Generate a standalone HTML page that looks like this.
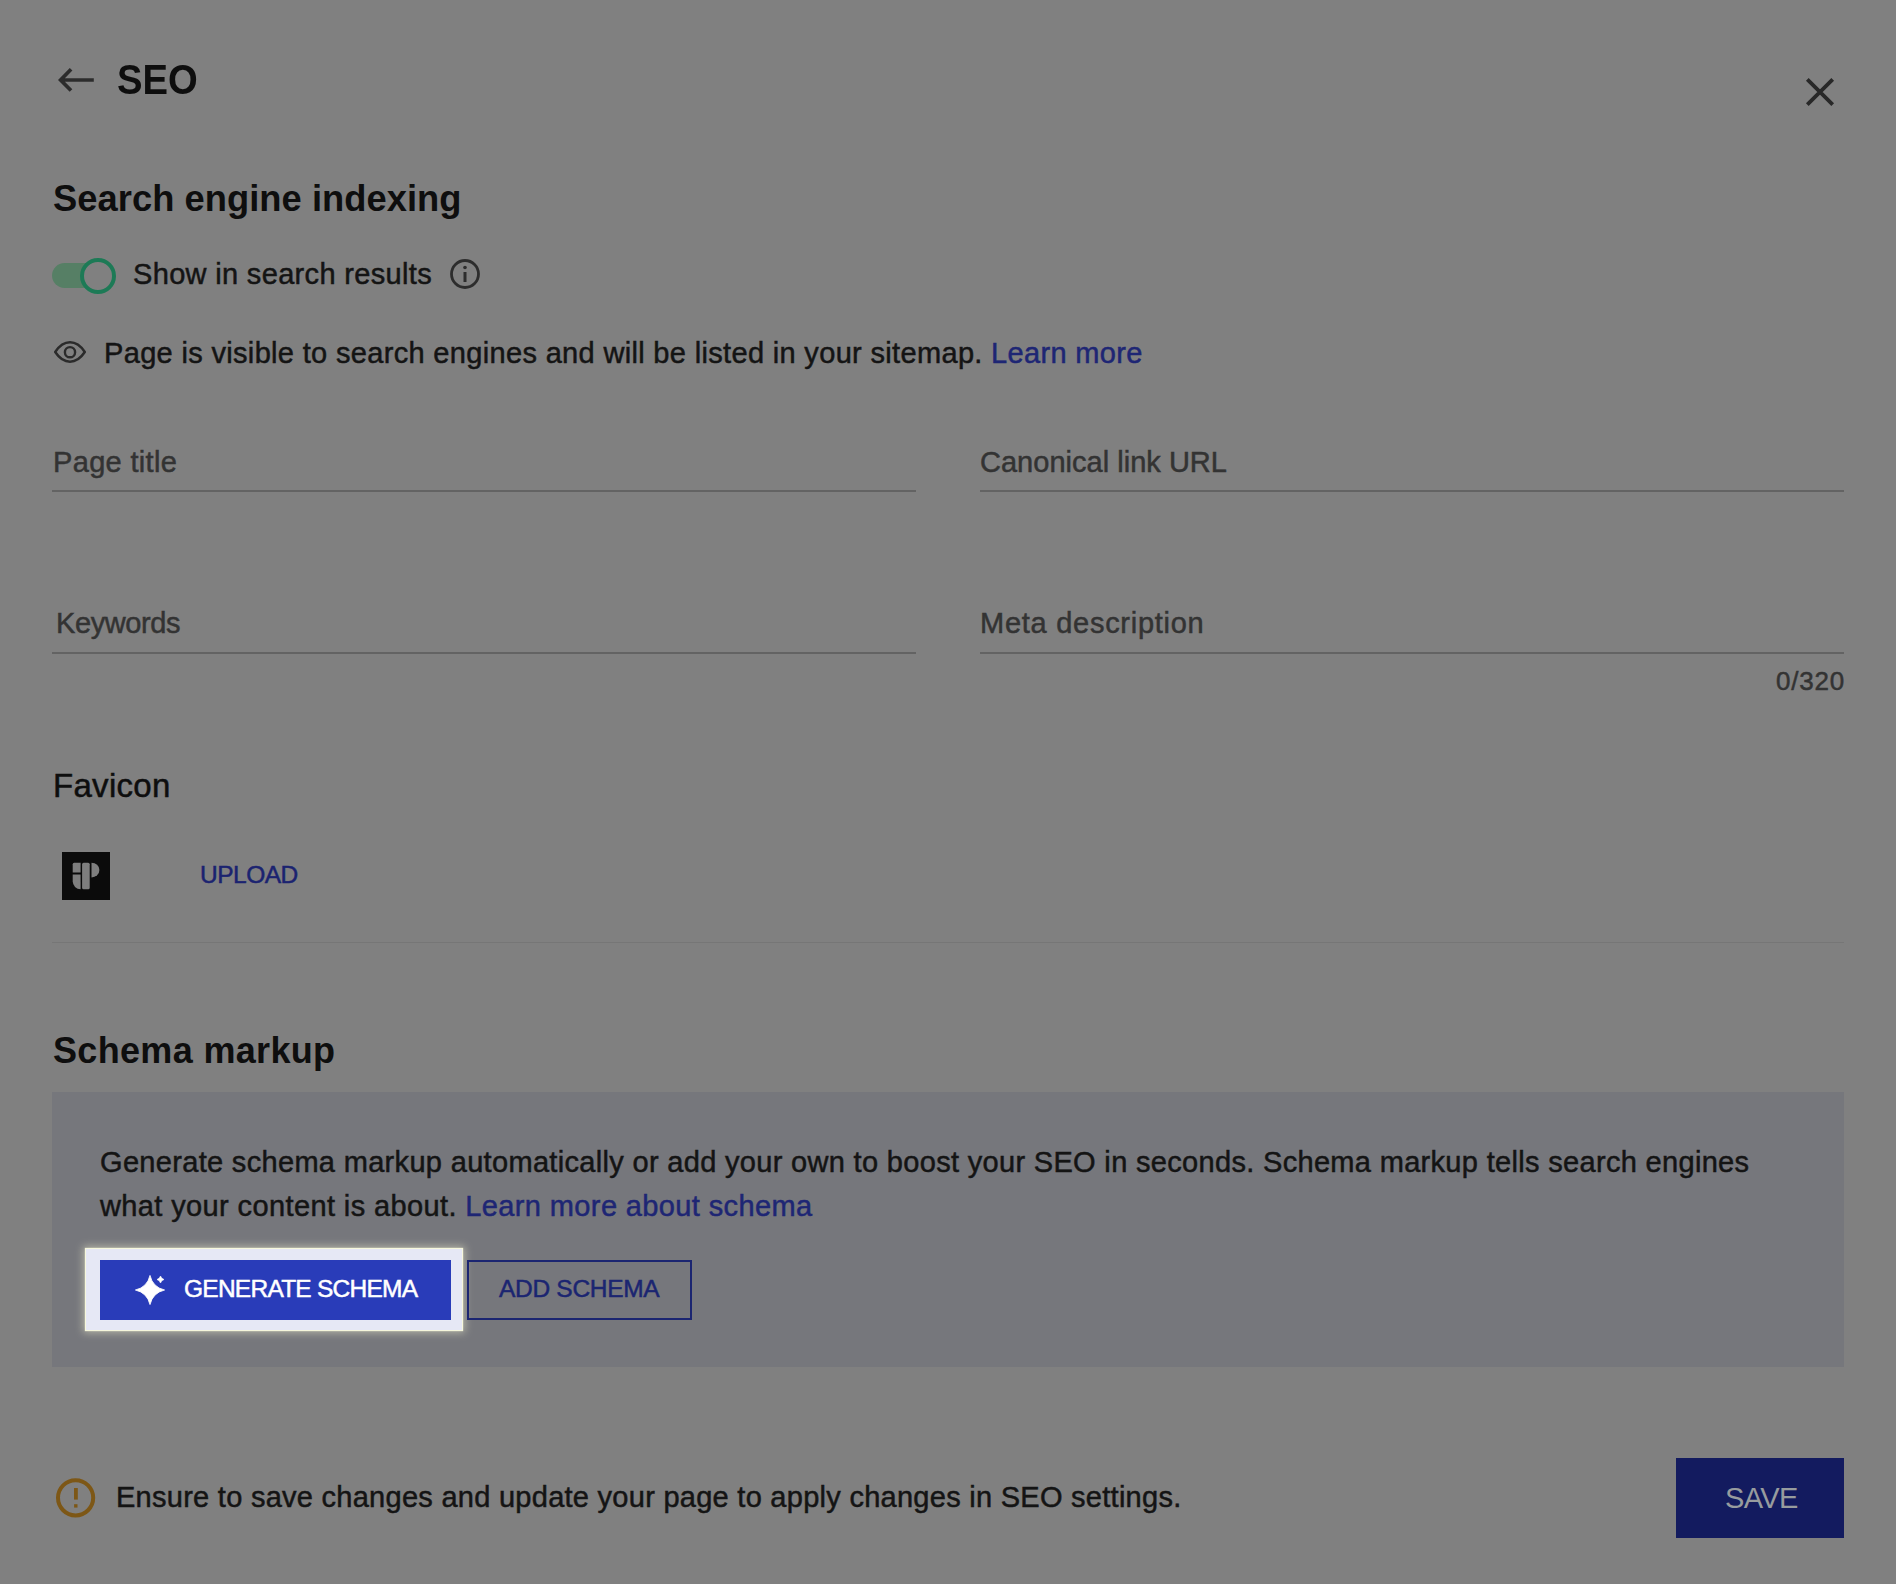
<!DOCTYPE html>
<html>
<head>
<meta charset="utf-8">
<style>
html,body{margin:0;padding:0;}
body{width:1896px;height:1584px;background:#808080;position:relative;overflow:hidden;font-family:"Liberation Sans",sans-serif;color:#111;}
.t{position:absolute;white-space:nowrap;line-height:1;-webkit-text-stroke:0.5px currentColor;}
.line{position:absolute;height:2px;background:#636363;}
</style>
</head>
<body>
<!-- header -->
<svg style="position:absolute;left:54px;top:64px" width="44" height="32" viewBox="0 0 44 32">
  <path d="M39.8 16 H7 M17.1 5.3 L6.6 16 L17 26.5" fill="none" stroke="#2c2c2c" stroke-width="3.7" stroke-linecap="butt" stroke-linejoin="miter"/>
</svg>
<div class="t" id="seo" style="left:117px;top:59.35px;font-size:42px;font-weight:bold;color:#0e0e0e;letter-spacing:0px;-webkit-text-stroke:0;transform:scaleX(0.91);transform-origin:0 0;">SEO</div>
<svg style="position:absolute;left:1800px;top:72px" width="40" height="40" viewBox="0 0 40 40">
  <path d="M7.3 7.3 L32.7 32.7 M32.7 7.3 L7.3 32.7" fill="none" stroke="#282828" stroke-width="3.8"/>
</svg>

<div class="t" id="h1" style="left:53px;top:180.97px;font-size:36.3px;font-weight:bold;color:#0e0e0e;letter-spacing:0.05px;-webkit-text-stroke:0;">Search engine indexing</div>

<!-- toggle -->
<div style="position:absolute;left:52px;top:263px;width:50px;height:25px;border-radius:12.5px;background:#567f65;filter:blur(0.6px);"></div>
<div style="position:absolute;left:80px;top:258px;width:28px;height:28px;border-radius:50%;border:4px solid #1d7a56;background:#808080;"></div>
<div class="t" id="show" style="left:133px;top:260.45px;font-size:29px;color:#141414;letter-spacing:0.33px;">Show in search results</div>
<svg style="position:absolute;left:448px;top:257px" width="34" height="34" viewBox="0 0 34 34">
  <circle cx="17" cy="17" r="13.5" fill="none" stroke="#2d2d2d" stroke-width="2.8"/>
  <rect x="15.5" y="15" width="3" height="10" fill="#2d2d2d"/>
  <circle cx="17" cy="10.5" r="1.8" fill="#2d2d2d"/>
</svg>

<!-- eye -->
<svg style="position:absolute;left:48px;top:332px" width="50" height="40" viewBox="0 0 50 40">
  <path d="M7.2 20 C11.5 13.5 16 10.3 22 10.3 C28 10.3 32.5 13.5 36.8 20 C32.5 26.5 28 29.7 22 29.7 C16 29.7 11.5 26.5 7.2 20 Z" fill="none" stroke="#2b2b2b" stroke-width="2.5" stroke-linejoin="round"/>
  <circle cx="22" cy="20.2" r="5.1" fill="none" stroke="#2b2b2b" stroke-width="2.4"/>
</svg>
<div class="t" id="vis" style="left:104px;top:339px;font-size:29px;color:#141414;letter-spacing:0.33px;">Page is visible to search engines and will be listed in your sitemap. <span style="color:#1e2674">Learn more</span></div>

<!-- fields -->
<div class="t" id="pt" style="left:53px;top:447.65px;font-size:29px;color:#333;letter-spacing:0.33px;">Page title</div>
<div class="line" style="left:52px;top:490px;width:864px;"></div>
<div class="t" id="cl" style="left:980px;top:447.65px;font-size:29px;color:#333;letter-spacing:0.02px;">Canonical link URL</div>
<div class="line" style="left:980px;top:490px;width:864px;"></div>

<div class="t" id="kw" style="left:56px;top:608.95px;font-size:29px;color:#333;letter-spacing:-0.42px;">Keywords</div>
<div class="line" style="left:52px;top:652px;width:864px;"></div>
<div class="t" id="md" style="left:980px;top:609.45px;font-size:29px;color:#333;letter-spacing:0.73px;">Meta description</div>
<div class="line" style="left:980px;top:652px;width:864px;"></div>
<div class="t" id="cnt" style="right:51px;top:667.99px;font-size:26px;color:#333;letter-spacing:0.8px;">0/320</div>

<!-- favicon -->
<div class="t" id="fav" style="left:53px;top:769.07px;font-size:33px;color:#0e0e0e;letter-spacing:0.3px;">Favicon</div>
<div style="position:absolute;left:62px;top:852px;width:48px;height:48px;background:#0b0b0b;"></div>
<svg style="position:absolute;left:62px;top:852px" width="48" height="48" viewBox="0 0 48 48">
  <path d="M12.2 10.7 H18.6 V20.5 H10.7 V12.2 A1.5 1.5 0 0 1 12.2 10.7 Z" fill="#7e7e7e"/>
  <path d="M10.7 22.6 H18.6 V37.2 A7.9 7.9 0 0 1 10.7 29.3 Z" fill="#7e7e7e"/>
  <path d="M21.6 10.7 H26.2 A1.5 1.5 0 0 1 27.7 12.2 V35.7 A1.5 1.5 0 0 1 26.2 37.2 H21.6 A1.5 1.5 0 0 1 20.1 35.7 V12.2 A1.5 1.5 0 0 1 21.6 10.7 Z" fill="#7e7e7e"/>
  <path d="M29.5 10.7 A7.9 7.35 0 0 1 29.5 25.4 Z" fill="#7e7e7e"/>
</svg>
<div class="t" id="upl" style="left:200px;top:863.26px;font-size:24.5px;color:#1b2370;letter-spacing:-0.5px;">UPLOAD</div>
<div style="position:absolute;left:52px;top:942px;width:1792px;height:1px;background:#767676;"></div>

<!-- schema -->
<div class="t" id="sm" style="left:53px;top:1032.53px;font-size:36px;font-weight:bold;color:#0e0e0e;letter-spacing:0.33px;-webkit-text-stroke:0;">Schema markup</div>
<div style="position:absolute;left:52px;top:1092px;width:1792px;height:275px;background:#76777c;"></div>
<div class="t" id="sl1" style="left:100px;top:1147.85px;font-size:29px;color:#141414;letter-spacing:0.32px;">Generate schema markup automatically or add your own to boost your SEO in seconds. Schema markup tells search engines</div>
<div class="t" id="sl2" style="left:100px;top:1192.45px;font-size:29px;color:#141414;letter-spacing:0.38px;">what your content is about. <span style="color:#1e2674">Learn more about schema</span></div>

<div style="position:absolute;left:86px;top:1249px;width:376px;height:81px;background:#e6e8f5;box-shadow:0 0 1px 1px #f6f7dc, 0 0 8px 3px rgba(250,250,215,0.45);"></div>
<div style="position:absolute;left:100px;top:1260px;width:351px;height:60px;background:#293cb9;"></div>
<svg style="position:absolute;left:130px;top:1270px" width="40" height="40" viewBox="0 0 40 40">
  <path d="M20 5.4 Q22.8 17.2 34.6 20 Q22.8 22.8 20 34.6 Q17.2 22.8 5.4 20 Q17.2 17.2 20 5.4 Z" fill="#fff" stroke="#fff" stroke-width="0.8" stroke-linejoin="round"/>
  <path d="M30.5 6 Q31.3 8.7 34 9.5 Q31.3 10.3 30.5 13 Q29.7 10.3 27 9.5 Q29.7 8.7 30.5 6 Z" fill="#fff" stroke="#fff" stroke-width="0.6" stroke-linejoin="round"/>
</svg>
<div class="t" id="gen" style="left:184px;top:1277.26px;font-size:24.5px;color:#fff;letter-spacing:-0.75px;">GENERATE SCHEMA</div>
<div style="position:absolute;left:467px;top:1260px;width:221px;height:56px;border:2px solid #1b2571;"></div>
<div class="t" id="add" style="left:499px;top:1276.86px;font-size:24.5px;color:#1b2571;letter-spacing:-0.3px;">ADD SCHEMA</div>

<!-- footer -->
<svg style="position:absolute;left:54px;top:1476px" width="44" height="44" viewBox="0 0 44 44">
  <circle cx="21.6" cy="21.8" r="17.6" fill="none" stroke="#7d5716" stroke-width="4"/>
  <rect x="20" y="12" width="3.8" height="11.6" fill="#7d5716"/>
  <rect x="20.1" y="28.2" width="3.4" height="3.4" fill="#7d5716"/>
</svg>
<div class="t" id="ens" style="left:116px;top:1483.45px;font-size:29px;color:#141414;letter-spacing:0.27px;">Ensure to save changes and update your page to apply changes in SEO settings.</div>
<div style="position:absolute;left:1676px;top:1458px;width:168px;height:80px;background:#131b5f;"></div>
<div class="t" id="save" style="left:1725px;top:1483.95px;font-size:29px;color:#979c9e;letter-spacing:-0.6px;-webkit-text-stroke:0;">SAVE</div>
</body>
</html>
